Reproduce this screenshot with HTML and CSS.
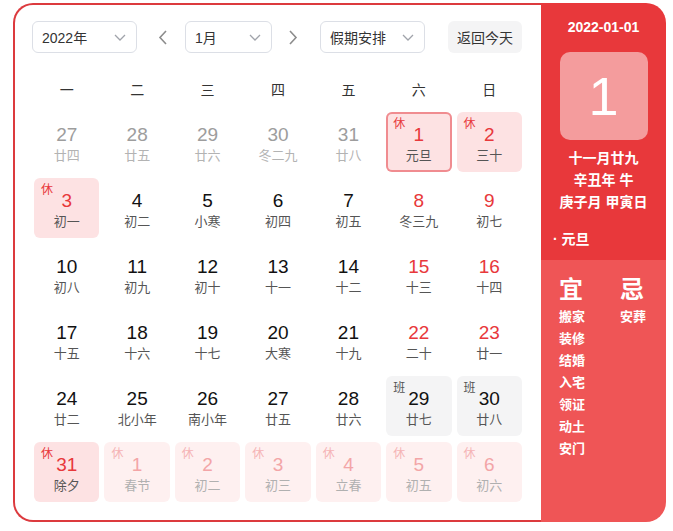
FILE: index.html
```html
<!DOCTYPE html>
<html lang="zh-CN">
<head>
<meta charset="utf-8">
<title>万年历</title>
<link rel="stylesheet" href="styles.css">
</head>
<body>
<div class="cal">
  <div class="main">
    <div class="toolbar">
      <div class="select sel-year"><span>2022年</span><svg class="chev" width="12" height="7" viewBox="0 0 12 7"><path d="M1 1l5 5 5-5" /></svg></div>
      <div class="arrow"><svg width="10" height="15" viewBox="0 0 10 15"><path d="M8 1L2 7.5 8 14" /></svg></div>
      <div class="select sel-month"><span>1月</span><svg class="chev" width="12" height="7" viewBox="0 0 12 7"><path d="M1 1l5 5 5-5" /></svg></div>
      <div class="arrow arrow-next"><svg width="10" height="15" viewBox="0 0 10 15"><path d="M2 1l6 6.5L2 14" /></svg></div>
      <div class="select sel-holiday"><span>假期安排</span><svg class="chev" width="12" height="7" viewBox="0 0 12 7"><path d="M1 1l5 5 5-5" /></svg></div>
      <div class="today">返回今天</div>
    </div>
    <div class="week">
      <span>一</span><span>二</span><span>三</span><span>四</span><span>五</span><span>六</span><span>日</span>
    </div>
    <div class="grid">
      <div class="cell other"><b>27</b><i>廿四</i></div>
      <div class="cell other"><b>28</b><i>廿五</i></div>
      <div class="cell other"><b>29</b><i>廿六</i></div>
      <div class="cell other"><b>30</b><i>冬二九</i></div>
      <div class="cell other"><b>31</b><i>廿八</i></div>
      <div class="cell rest sel red"><em>休</em><b>1</b><i>元旦</i></div>
      <div class="cell rest red"><em>休</em><b>2</b><i>三十</i></div>

      <div class="cell rest red"><em>休</em><b>3</b><i>初一</i></div>
      <div class="cell"><b>4</b><i>初二</i></div>
      <div class="cell"><b>5</b><i>小寒</i></div>
      <div class="cell"><b>6</b><i>初四</i></div>
      <div class="cell"><b>7</b><i>初五</i></div>
      <div class="cell red"><b>8</b><i>冬三九</i></div>
      <div class="cell red"><b>9</b><i>初七</i></div>

      <div class="cell"><b>10</b><i>初八</i></div>
      <div class="cell"><b>11</b><i>初九</i></div>
      <div class="cell"><b>12</b><i>初十</i></div>
      <div class="cell"><b>13</b><i>十一</i></div>
      <div class="cell"><b>14</b><i>十二</i></div>
      <div class="cell red"><b>15</b><i>十三</i></div>
      <div class="cell red"><b>16</b><i>十四</i></div>

      <div class="cell"><b>17</b><i>十五</i></div>
      <div class="cell"><b>18</b><i>十六</i></div>
      <div class="cell"><b>19</b><i>十七</i></div>
      <div class="cell"><b>20</b><i>大寒</i></div>
      <div class="cell"><b>21</b><i>十九</i></div>
      <div class="cell red"><b>22</b><i>二十</i></div>
      <div class="cell red"><b>23</b><i>廿一</i></div>

      <div class="cell"><b>24</b><i>廿二</i></div>
      <div class="cell"><b>25</b><i>北小年</i></div>
      <div class="cell"><b>26</b><i>南小年</i></div>
      <div class="cell"><b>27</b><i>廿五</i></div>
      <div class="cell"><b>28</b><i>廿六</i></div>
      <div class="cell work"><em>班</em><b>29</b><i>廿七</i></div>
      <div class="cell work"><em>班</em><b>30</b><i>廿八</i></div>

      <div class="cell rest red"><em>休</em><b>31</b><i>除夕</i></div>
      <div class="cell next"><em>休</em><b>1</b><i>春节</i></div>
      <div class="cell next"><em>休</em><b>2</b><i>初二</i></div>
      <div class="cell next"><em>休</em><b>3</b><i>初三</i></div>
      <div class="cell next"><em>休</em><b>4</b><i>立春</i></div>
      <div class="cell next"><em>休</em><b>5</b><i>初五</i></div>
      <div class="cell next"><em>休</em><b>6</b><i>初六</i></div>
    </div>
  </div>
  <aside class="side">
    <div class="side-top">
      <div class="date">2022-01-01</div>
      <div class="big">1</div>
      <div class="lunar first">十一月廿九</div>
      <div class="lunar">辛丑年 牛</div>
      <div class="lunar">庚子月 甲寅日</div>
      <div class="fest">· 元旦</div>
    </div>
    <div class="side-bottom">
      <div class="col col-yi">
        <div class="yj">宜</div>
        <div class="item">搬家</div>
        <div class="item">装修</div>
        <div class="item">结婚</div>
        <div class="item">入宅</div>
        <div class="item">领证</div>
        <div class="item">动土</div>
        <div class="item">安门</div>
      </div>
      <div class="col">
        <div class="yj">忌</div>
        <div class="item">安葬</div>
      </div>
    </div>
  </aside>
</div>
</body>
</html>
```

FILE: styles.css
```css
* { box-sizing: border-box; }

body {
  margin: 0;
  background: #fff;
  font-family: "Liberation Sans", "Noto Sans CJK SC", sans-serif;
  color: #333;
}

.cal {
  display: flex;
  margin: 3px 0 0 13px;
  width: 653px;
  height: 519px;
}

.main {
  width: 528px;
  height: 100%;
  border: 2px solid #dc3a3e;
  border-right: none;
  border-radius: 20px 0 0 20px;
  padding: 16px 19px 0 17px;
}

.toolbar {
  display: flex;
  align-items: center;
  height: 32px;
}

.select {
  height: 32px;
  border: 1px solid #dcdfe6;
  border-radius: 6px;
  display: flex;
  align-items: center;
  justify-content: space-between;
  padding: 0 10px 0 9px;
  font-size: 14px;
  color: #333;
}

.chev path,
.arrow path {
  fill: none;
  stroke: #a0a3aa;
  stroke-width: 1.3;
}

.arrow path {
  stroke: #8c8c8c;
  stroke-width: 1.6;
}

.sel-year { width: 105px; }
.sel-month { width: 87px; margin-left: 6px; }
.sel-holiday { width: 105px; margin-left: 11px; }

.arrow {
  width: 32px;
  height: 32px;
  display: flex;
  align-items: center;
  justify-content: center;
}

.sel-year + .arrow { margin-left: 10px; }
.arrow-next { margin-left: 5px; }

.today {
  margin-left: auto;
  width: 74px;
  height: 32px;
  border-radius: 6px;
  background: #f4f4f5;
  font-size: 14px;
  color: #333;
  display: flex;
  align-items: center;
  justify-content: center;
}

.week {
  display: grid;
  grid-template-columns: repeat(7, 1fr);
  column-gap: 5px;
  margin: 16px 0 0 2px;
  height: 40px;
  align-items: center;
  text-align: center;
  font-size: 14px;
  color: #333;
}

.grid {
  display: grid;
  grid-template-columns: repeat(7, 1fr);
  grid-auto-rows: 60px;
  column-gap: 5px;
  row-gap: 6px;
  margin: 3px 0 0 2px;
}

.cell {
  position: relative;
  border-radius: 6px;
  display: flex;
  flex-direction: column;
  align-items: center;
  padding-top: 12px;
}

.cell b {
  font-weight: normal;
  font-size: 19px;
  line-height: 22px;
  color: #111;
}

.cell i {
  font-style: normal;
  font-size: 13px;
  line-height: 16px;
  margin-top: 2px;
  color: #555;
}

.cell em {
  position: absolute;
  top: 4px;
  left: 7px;
  font-style: normal;
  font-size: 12px;
  line-height: 16px;
  color: #e8383b;
}

.cell.other b { color: #9d9d9d; }
.cell.other i { color: #b3b3b3; }

.cell.red b { color: #e8383b; }

.cell.rest { background: #fde2e3; }
.cell.sel { box-shadow: inset 0 0 0 2px #f08c90; }

.cell.work { background: #f4f4f5; }
.cell.work em { color: #555; }

.cell.next { background: #fef0f0; }
.cell.next b { color: #f3a5a7; }
.cell.next i { color: #b0b0b0; }
.cell.next em { color: #f5b3b5; }

.side {
  width: 125px;
  height: 100%;
  border-radius: 0 20px 20px 0;
  overflow: hidden;
  display: flex;
  flex-direction: column;
  color: #fff;
}

.side-top {
  height: 257px;
  background: #e8383b;
  padding-top: 14px;
  text-align: center;
}

.date {
  font-size: 14px;
  font-weight: bold;
  line-height: 20px;
}

.big {
  width: 88px;
  height: 88px;
  margin: 15px auto 0;
  border-radius: 10px;
  background: rgba(255, 255, 255, 0.5);
  font-size: 54px;
  line-height: 88px;
}

.lunar {
  font-size: 14px;
  font-weight: bold;
  line-height: 22px;
}

.lunar.first { margin-top: 7px; }

.fest {
  margin-top: 15px;
  text-align: left;
  padding-left: 12px;
  font-size: 14px;
  font-weight: bold;
  line-height: 22px;
}

.side-bottom {
  flex: 1;
  background: #ef5556;
  display: flex;
  padding: 15px 0 0 18px;
}

.col-yi { width: 61px; }

.yj {
  font-size: 24px;
  font-weight: bold;
  line-height: 30px;
  margin-bottom: 1px;
}

.item {
  font-size: 13px;
  font-weight: bold;
  line-height: 22px;
}
```
